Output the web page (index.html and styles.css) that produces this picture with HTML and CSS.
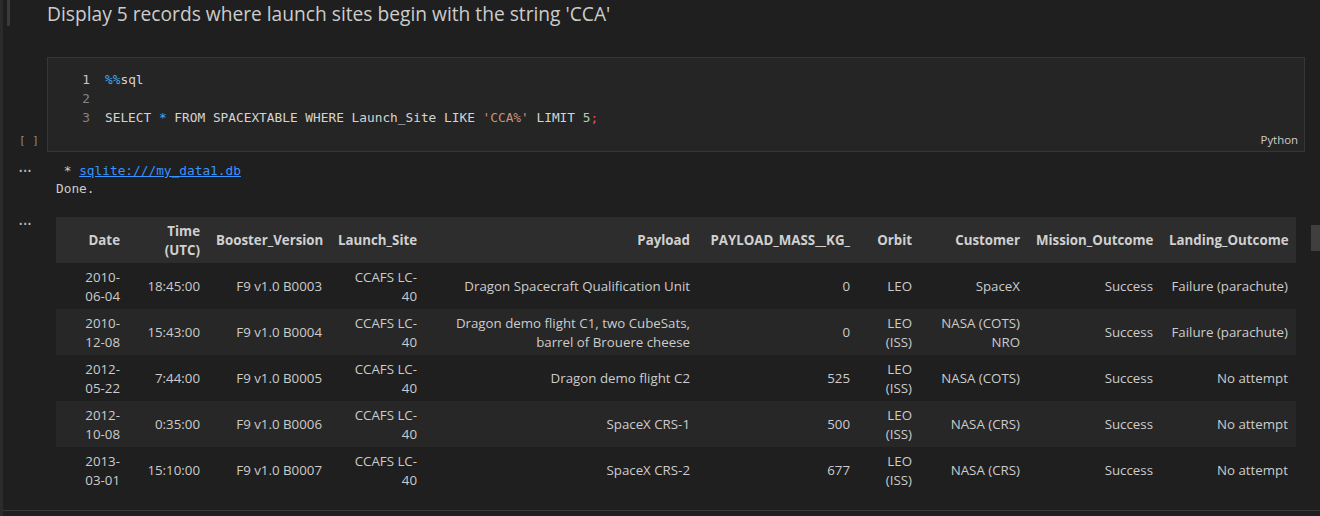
FILE: index.html
```html
<!DOCTYPE html>
<html>
<head>
<meta charset="utf-8">
<link rel="stylesheet" href="styles.css">
</head>
<body>
<div class="notebook">
  <div class="cell md-cell">
    <div class="gutter"><span class="md-bar"></span></div>
    <h2 class="md-title">Display 5 records where launch sites begin with the string 'CCA'</h2>
  </div>

  <div class="cell code-cell">
    <div class="gutter exec"><span class="exec-count">[ ]</span></div>
    <div class="editor">
      <div class="code-line"><span class="ln ln-active">1</span><span class="code"><span class="tk-magic">%%</span>sql</span></div>
      <div class="code-line"><span class="ln">2</span><span class="code"></span></div>
      <div class="code-line"><span class="ln">3</span><span class="code">SELECT <span class="tk-op">*</span> FROM SPACEXTABLE WHERE Launch_Site LIKE <span class="tk-str">'CCA%'</span> LIMIT <span class="tk-num">5</span><span class="tk-punct">;</span></span></div>
      <div class="lang">Python</div>
    </div>
  </div>

  <div class="cell out-cell">
    <div class="gutter out-gutter">···</div>
    <div class="out-text">
      <div class="out-line"> * <a class="out-link" href="#">sqlite:///my_data1.db</a></div>
      <div class="out-line">Done.</div>
    </div>
  </div>

  <div class="cell out-cell table-cell">
    <div class="gutter out-gutter">···</div>
    <div class="table-wrap">
      <table class="df">
        <colgroup>
          <col class="c-date"><col class="c-time"><col class="c-boost"><col class="c-site"><col class="c-pay"><col class="c-mass"><col class="c-orbit"><col class="c-cust"><col class="c-miss"><col class="c-land">
        </colgroup>
        <thead>
          <tr><th>Date</th><th>Time (UTC)</th><th>Booster_Version</th><th>Launch_Site</th><th>Payload</th><th>PAYLOAD_MASS__KG_</th><th>Orbit</th><th>Customer</th><th>Mission_Outcome</th><th>Landing_Outcome</th></tr>
        </thead>
        <tbody>
          <tr><td class="col-date">2010-06-04</td><td>18:45:00</td><td>F9 v1.0 B0003</td><td class="col-site">CCAFS LC-40</td><td>Dragon Spacecraft Qualification Unit</td><td>0</td><td>LEO</td><td>SpaceX</td><td>Success</td><td>Failure (parachute)</td></tr>
          <tr><td class="col-date">2010-12-08</td><td>15:43:00</td><td>F9 v1.0 B0004</td><td class="col-site">CCAFS LC-40</td><td>Dragon demo flight C1, two CubeSats, barrel of Brouere cheese</td><td>0</td><td>LEO (ISS)</td><td>NASA (COTS) NRO</td><td>Success</td><td>Failure (parachute)</td></tr>
          <tr><td class="col-date">2012-05-22</td><td>7:44:00</td><td>F9 v1.0 B0005</td><td class="col-site">CCAFS LC-40</td><td>Dragon demo flight C2</td><td>525</td><td>LEO (ISS)</td><td>NASA (COTS)</td><td>Success</td><td>No attempt</td></tr>
          <tr><td class="col-date">2012-10-08</td><td>0:35:00</td><td>F9 v1.0 B0006</td><td class="col-site">CCAFS LC-40</td><td>SpaceX CRS-1</td><td>500</td><td>LEO (ISS)</td><td>NASA (CRS)</td><td>Success</td><td>No attempt</td></tr>
          <tr><td class="col-date">2013-03-01</td><td>15:10:00</td><td>F9 v1.0 B0007</td><td class="col-site">CCAFS LC-40</td><td>SpaceX CRS-2</td><td>677</td><td>LEO (ISS)</td><td>NASA (CRS)</td><td>Success</td><td>No attempt</td></tr>
        </tbody>
      </table>
    </div>
    <div class="scroll-thumb"></div>
  </div>
</div>
<div class="bottom-rule"></div>
</body>
</html>
```
FILE: styles.css
```css
html, body {
  margin: 0;
  padding: 0;
  background: #1f1f1f;
  height: 516px;
  overflow: hidden;
}
body {
  border-left: 3px solid #2b2b2b;
  box-sizing: border-box;
  font-family: "Open Sans", "Noto Sans", sans-serif;
  color: #cccccc;
}
.notebook {
  height: 510px;
  overflow: hidden;
}
.cell {
  display: flex;
}
.gutter {
  width: 44px;
  flex: none;
}
.md-cell {
  height: 57px;
}
.md-bar {
  display: block;
  width: 3px;
  height: 26px;
  margin-left: 4px;
  background: #3a3a3a;
}
.md-title {
  margin: 1px 0 0 0;
  font-size: 19.2px;
  font-weight: 400;
  line-height: 26px;
  color: #cccccc;
}
.code-cell {
  height: 95px;
}
.exec {
  display: flex;
  align-items: flex-end;
  justify-content: center;
  padding-bottom: 4px;
  padding-left: 8px;
  box-sizing: border-box;
}
.exec-count {
  font-family: "DejaVu Sans Mono", monospace;
  font-size: 11px;
  line-height: 14px;
  color: #8a8a8a;
}
.editor {
  width: 1258px;
  box-sizing: border-box;
  border: 1px solid #363636;
  background: #252525;
  padding: 12px 0 0 0;
  font-family: "DejaVu Sans Mono", monospace;
  font-size: 12.8px;
  line-height: 19px;
}
.code-line {
  display: flex;
  height: 19px;
  white-space: pre;
}
.ln {
  width: 42px;
  text-align: right;
  color: #858585;
  flex: none;
}
.ln-active {
  color: #c6c6c6;
}
.code {
  padding-left: 15px;
  color: #d4d4d4;
}
.tk-magic { color: #3fa9f5; }
.tk-op { color: #3fa9f5; }
.tk-str { color: #ce9178; }
.tk-num { color: #b5cea8; }
.tk-punct { color: #f14c4c; }
.lang {
  font-family: "Open Sans", sans-serif;
  font-size: 11.4px;
  color: #cccccc;
  text-align: right;
  padding-right: 6px;
  margin-top: 5px;
  line-height: 16px;
}
.out-cell {
  margin-top: 10px;
}
.out-gutter {
  font-family: "DejaVu Sans", sans-serif;
  font-size: 17px;
  line-height: 18px;
  color: #bbbbbb;
  padding-left: 15px;
  box-sizing: border-box;
  letter-spacing: -1px;
}
.out-text {
  padding-left: 9px;
  font-family: "DejaVu Sans Mono", monospace;
  font-size: 12.8px;
  line-height: 18px;
  color: #cccccc;
}
.out-line {
  white-space: pre;
}
.out-link {
  color: #3794ff;
  text-decoration: underline;
}
.table-cell {
  margin-top: 19px;
}
.table-cell .out-gutter {
  line-height: 14px;
}
.table-wrap {
  padding-left: 9px;
}
.df {
  table-layout: fixed;
  border-collapse: collapse;
  width: 1240px;
  font-size: 13.3px;
  line-height: 19px;
  color: #cccccc;
}
.c-date { width: 72px; }
.c-time { width: 80px; }
.c-boost { width: 122px; }
.c-site { width: 95px; }
.c-pay { width: 273px; }
.c-mass { width: 160px; }
.c-orbit { width: 62px; }
.c-cust { width: 108px; }
.c-miss { width: 133px; }
.c-land { width: 135px; }
.df th, .df td {
  text-align: right;
  vertical-align: middle;
  padding: 1px 8px 0 8px;
  height: 46px;
  box-sizing: border-box;
  white-space: normal;
}
.df .col-date {
  padding-left: 20px;
}
.df .col-site {
  padding-left: 22px;
}
.df th {
  font-weight: 700;
  color: #d0d0d0;
}
.df thead tr {
  background: #2d2d2d;
}
.df tbody tr:nth-child(even) {
  background: #272727;
}
.scroll-thumb {
  width: 9px;
  height: 26px;
  margin-left: 15px;
  margin-top: 8px;
  background: #3f3f3f;
}
.bottom-rule {
  height: 1px;
  background: #3a3a3a;
}
```
